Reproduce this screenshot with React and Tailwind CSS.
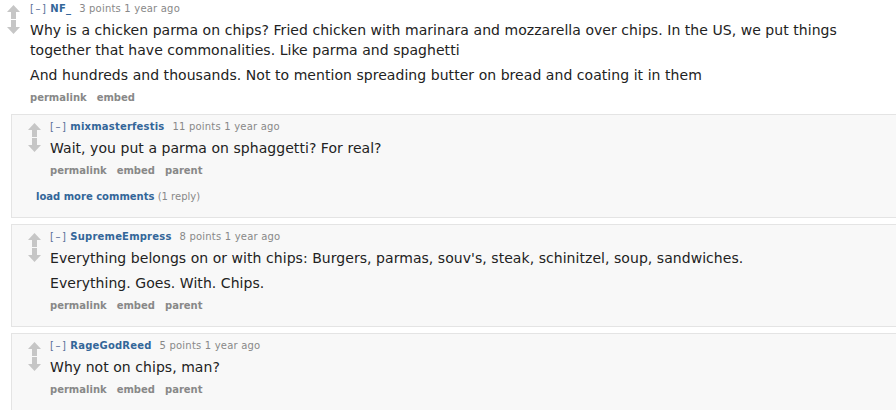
import React from "react";

const font = { fontFamily: '"DejaVu Sans", Verdana, sans-serif' };

function Arrows() {
  return (
    <div className="flex flex-col items-start gap-[1px] pt-[2px]">
      <svg width="13" height="14" viewBox="0 0 13 14">
        <path d="M6.5 0 L13 7 L9 7 L9 14 L4 14 L4 7 L0 7 Z" fill="#c6c6c6" />
      </svg>
      <svg width="13" height="14" viewBox="0 0 13 14">
        <path d="M6.5 14 L13 7 L9 7 L9 0 L4 0 L4 7 L0 7 Z" fill="#c6c6c6" />
      </svg>
    </div>
  );
}

function Tagline({ author, points }) {
  return (
    <div className="text-[10px] leading-[12px] text-[#888] whitespace-nowrap tracking-[0.2px]">
      <span className="text-[#5a6f9a] tracking-[1.5px]">[–]</span>
      <span className="ml-[3px] font-bold text-[#369]">{author}</span>
      <span className="ml-[8px]">{points} points 1 year ago</span>
    </div>
  );
}

function Buttons({ parent }) {
  return (
    <div className="mt-[7px] flex gap-[10px] text-[10px] leading-[12px] font-bold text-[#888]">
      <span>permalink</span>
      <span>embed</span>
      {parent && <span>parent</span>}
    </div>
  );
}

function Body({ paras }) {
  return (
    <div className="mt-[5px] max-w-[840px] text-[14px] leading-[20px] text-[#222] tracking-[0.05px]">
      {paras.map((p, i) => (
        <p key={i} className={i > 0 ? "mt-[5px]" : ""}>
          {p}
        </p>
      ))}
    </div>
  );
}

function Comment({ author, points, paras, parent }) {
  return (
    <div className="flex">
      <div className="w-[22px] shrink-0">
        <Arrows />
      </div>
      <div className="flex-1 min-w-0">
        <Tagline author={author} points={points} />
        <Body paras={paras} />
        <Buttons parent={parent} />
      </div>
    </div>
  );
}

function Child({ children, mb }) {
  return (
    <div className={`ml-[11px] border-l border-t border-b border-[#e4e4e4] bg-[#f8f8f8] pl-[16px] pt-[6px] ${mb}`}>
      {children}
    </div>
  );
}

export default function App() {
  return (
    <div className="w-[896px] h-[410px] overflow-hidden bg-white" style={font}>
      <div className="pl-[7px] pt-[3px] flex">
        <div className="w-[23px] shrink-0">
          <Arrows />
        </div>
        <div className="flex-1 min-w-0">
          <Tagline author="NF_" points="3" />
          <Body
            paras={[
              "Why is a chicken parma on chips? Fried chicken with marinara and mozzarella over chips. In the US, we put things together that have commonalities. Like parma and spaghetti",
              "And hundreds and thousands. Not to mention spreading butter on bread and coating it in them",
            ]}
          />
          <Buttons />
        </div>
      </div>

      <div className="mt-[10px]">
        <Child mb="mb-[6px]">
          <div className="pb-[14px]">
            <Comment author="mixmasterfestis" points="11" paras={["Wait, you put a parma on sphaggetti? For real?"]} parent />
            <div className="mt-[14px] ml-[8px] text-[10px] leading-[12px]">
              <span className="font-bold text-[#369]">load more comments</span>{" "}
              <span className="text-[#888]">(1 reply)</span>
            </div>
          </div>
        </Child>
        <Child mb="mb-[6px]">
          <div className="pb-[14px]">
            <Comment
              author="SupremeEmpress"
              points="8"
              paras={[
                "Everything belongs on or with chips: Burgers, parmas, souv's, steak, schinitzel, soup, sandwiches.",
                "Everything. Goes. With. Chips.",
              ]}
              parent
            />
          </div>
        </Child>
        <Child mb="">
          <div className="pb-[30px]">
            <Comment author="RageGodReed" points="5" paras={["Why not on chips, man?"]} parent />
          </div>
        </Child>
      </div>
    </div>
  );
}
